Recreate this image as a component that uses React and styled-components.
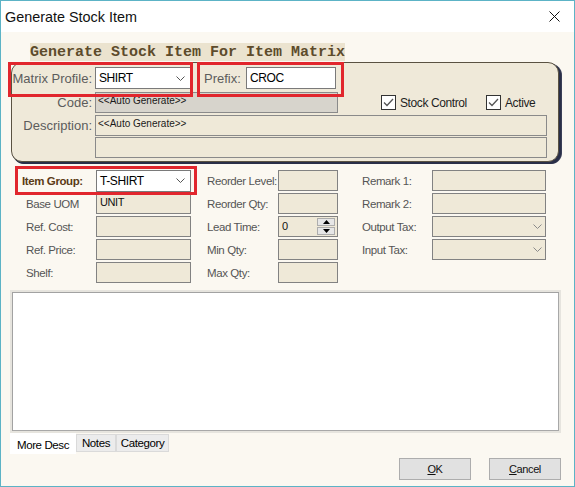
import React from 'react';
import styled, { createGlobalStyle, css } from 'styled-components';

const SANS = `"Liberation Sans", Arial, sans-serif`;

const narrow = css`
  font-family: ${SANS};
  font-size: 11.5px;
  letter-spacing: -0.4px;
`;

const Global = createGlobalStyle`
  html, body { margin: 0; padding: 0; background: #fff; }
  * { box-sizing: border-box; }
`;

const Window = styled.div`
  position: relative;
  width: 575px;
  height: 487px;
  border: 1px solid #5cb3c6;
  background: #fbf8f1;
  display: flex;
  flex-direction: column;
  overflow: hidden;
`;

const TitleBar = styled.div`
  height: 31px;
  flex: none;
  background: #fff;
  display: flex;
  align-items: center;
  justify-content: space-between;
  padding: 0 14px 0 4px;
  font-family: ${SANS};
  font-size: 14.4px;
  color: #111;
`;

const HeaderBand = styled.div`
  align-self: flex-start;
  margin: 11px 0 0 29px;
  width: 315px;
  height: 18px;
  background: #ebe3cf;
  font-family: "Liberation Mono", "Courier New", monospace;
  font-weight: bold;
  font-size: 15px;
  line-height: 19px;
  color: #5d4b2b;
  white-space: pre;
`;

const Panel = styled.div`
  margin: 1px 0 0 10px;
  width: 548px;
  height: 100px;
  flex: none;
  border: 1px solid #5a5242;
  border-radius: 11px;
  box-shadow: 1px 1px 0 #2a2f48, 2px 2px 0 #2a2f48, 3px 2px 0 #3a3f58;
  background: #efe9d9;
  padding-top: 4px;
  display: flex;
  flex-direction: column;
`;

const PanelRow = styled.div`
  display: flex;
  align-items: ${p => (p.$top ? 'flex-start' : 'center')};
  height: ${p => p.$h}px;
  margin-top: ${p => p.$mt || 0}px;
`;

const PanelLabel = styled.div`
  width: ${p => p.$w || 80}px;
  margin-left: ${p => p.$ml || 0}px;
  margin-right: 3px;
  text-align: ${p => (p.$left ? 'left' : 'right')};
  font-family: ${SANS};
  font-size: 13px;
  line-height: 21px;
  color: #5c5c5c;
  white-space: nowrap;
  flex: none;
`;

const WhiteSelect = styled.div`
  width: ${p => p.$w}px;
  height: 22px;
  background: #fff;
  border: 1px solid #7a7a7a;
  display: flex;
  align-items: center;
  justify-content: space-between;
  padding: 0 5px 0 3px;
  ${narrow};
  font-size: 12px;
  color: #000;
  flex: none;
`;

const CodeField = styled.div`
  width: ${p => p.$w}px;
  height: ${p => p.$h || 21}px;
  margin-top: ${p => p.$mt || 0}px;
  background: ${p => (p.$gray ? '#d7d4cc' : '#efe9d8')};
  border: 1px solid #8a8a8a;
  padding: 2px 2px;
  font-family: ${SANS};
  font-size: 10px;
  line-height: 12px;
  color: #1a1a1a;
  flex: none;
`;

const FieldStack = styled.div`
  display: flex;
  flex-direction: column;
`;

const CheckItem = styled.label`
  display: flex;
  align-items: center;
  gap: 4px;
  width: ${p => p.$w || 'auto'};
  margin-left: ${p => p.$ml || 0}px;
  ${narrow};
  font-size: 12px;
  color: #1e1e1e;
  flex: none;
`;

const Box = styled.span`
  width: 15px;
  height: 15px;
  background: #fff;
  border: 1px solid #333;
  display: flex;
  align-items: center;
  justify-content: center;
`;

const LowerGrid = styled.div`
  margin: 8px 0 0 21px;
  display: grid;
  grid-template-columns: 74px 95px 87px 60px 94px 114px;
  grid-auto-rows: 21px;
  row-gap: 2px;
  align-items: center;
`;

const GridLabel = styled.div`
  padding-left: ${p => p.$indent}px;
  ${narrow};
  font-weight: ${p => (p.$bold ? 'bold' : 'normal')};
  color: ${p => (p.$bold ? '#5b3b16' : '#555')};
  white-space: nowrap;
`;

const Field = styled.div`
  height: 21px;
  background: #efe9d8;
  border: 1px solid #828282;
  padding: 2px 3px;
  ${narrow};
  font-size: 11px;
  line-height: 13px;
  color: #111;
  display: flex;
  align-items: ${p => (p.$center ? 'center' : 'flex-start')};
  justify-content: space-between;
`;

const Spinner = styled.div`
  width: 18px;
  height: 17px;
  display: flex;
  flex-direction: column;
  gap: 1px;
  margin-right: -1px;
`;

const SpinBtn = styled.div`
  flex: 1;
  background: #e6e6e6;
  border: 1px solid #adadad;
  display: flex;
  align-items: center;
  justify-content: center;
`;

const TextArea = styled.div`
  margin: 7px 0 0 9px;
  width: 551px;
  height: 143px;
  flex: none;
  background: #fff;
  border: 2px solid #e6e4de;
  box-shadow: inset 1px 1px 0 #a2a2a2, inset -1px -1px 0 #a8a8a8;
`;

const Tabs = styled.div`
  margin-left: 9px;
  height: 21px;
  display: flex;
  align-items: flex-start;
  flex: none;
`;

const Tab = styled.div`
  width: ${p => p.$w}px;
  height: ${p => (p.$active ? 21 : 18)}px;
  margin-top: ${p => (p.$active ? 0 : 1)}px;
  background: ${p => (p.$active ? '#fff' : '#ececec')};
  border: 1px solid ${p => (p.$active ? '#fff' : '#dadada')};
  display: flex;
  align-items: center;
  justify-content: center;
  ${narrow};
  color: #000;
  padding-top: ${p => (p.$active ? 3 : 0)}px;
`;

const ButtonRow = styled.div`
  margin-top: 4px;
  display: flex;
  justify-content: flex-end;
  gap: 18px;
  padding-right: 13px;
`;

const Button = styled.div`
  width: 72px;
  height: 22px;
  background: #e1e1e1;
  border: 1px solid #adadad;
  display: flex;
  align-items: center;
  justify-content: center;
  ${narrow};
  font-size: 11px;
  color: #111;
  u { text-decoration: underline; }
`;

const RedMark = styled.div`
  position: absolute;
  left: ${p => p.$x}px;
  top: ${p => p.$y}px;
  width: ${p => p.$w}px;
  height: ${p => p.$h}px;
  border: 3px solid #e1262d;
  pointer-events: none;
`;

const Chevron = ({ color = '#555' }) => (
  <svg width="9" height="5" viewBox="0 0 9 5">
    <polyline points="0.5,0.5 4.5,4.5 8.5,0.5" fill="none" stroke={color} strokeWidth="1" />
  </svg>
);

const Check = () => (
  <svg width="11" height="9" viewBox="0 0 11 9">
    <polyline points="1,4.5 4,7.5 10,1" fill="none" stroke="#555" strokeWidth="1.3" />
  </svg>
);

const Tri = ({ up }) => (
  <svg width="7" height="4" viewBox="0 0 7 4">
    <polygon points={up ? '0,4 7,4 3.5,0' : '0,0 7,0 3.5,4'} fill="#000" />
  </svg>
);

const rows = [
  [
    { label: 'Item Group:', bold: true, kind: 'select', value: 'T-SHIRT' },
    { label: 'Reorder Level:' },
    { label: 'Remark 1:' },
  ],
  [
    { label: 'Base UOM', value: 'UNIT' },
    { label: 'Reorder Qty:' },
    { label: 'Remark 2:' },
  ],
  [
    { label: 'Ref. Cost:' },
    { label: 'Lead Time:', kind: 'spin', value: '0' },
    { label: 'Output Tax:', kind: 'tax' },
  ],
  [
    { label: 'Ref. Price:' },
    { label: 'Min Qty:' },
    { label: 'Input Tax:', kind: 'tax' },
  ],
  [{ label: 'Shelf:' }, { label: 'Max Qty:' }, null],
];

const indents = [4, 16, 24];

function Cell({ item }) {
  if (!item) return <span />;
  if (item.kind === 'select') {
    return <WhiteSelect $w={95}>{item.value}<Chevron /></WhiteSelect>;
  }
  if (item.kind === 'spin') {
    return (
      <Field $center>
        {item.value}
        <Spinner>
          <SpinBtn><Tri up /></SpinBtn>
          <SpinBtn><Tri /></SpinBtn>
        </Spinner>
      </Field>
    );
  }
  if (item.kind === 'tax') {
    return <Field $center><span /><Chevron color="#8a8a8a" /></Field>;
  }
  return <Field>{item.value || ''}</Field>;
}

export default function App() {
  return (
    <>
      <Global />
      <Window>
        <TitleBar>
          <span>Generate Stock Item</span>
          <svg width="11" height="11" viewBox="0 0 11 11">
            <path d="M0.5 0.5 L10.5 10.5 M10.5 0.5 L0.5 10.5" stroke="#111" strokeWidth="1" />
          </svg>
        </TitleBar>

        <HeaderBand>Generate Stock Item For Item Matrix</HeaderBand>

        <Panel>
          <PanelRow $h={22}>
            <PanelLabel>Matrix Profile:</PanelLabel>
            <WhiteSelect $w={96}>SHIRT<Chevron /></WhiteSelect>
            <PanelLabel $w={39} $ml={13} $left>Prefix:</PanelLabel>
            <WhiteSelect $w={90}>CROC</WhiteSelect>
          </PanelRow>
          <PanelRow $h={21} $mt={3}>
            <PanelLabel>Code:</PanelLabel>
            <CodeField $w={243} $gray>&lt;&lt;Auto Generate&gt;&gt;</CodeField>
            <CheckItem $ml={43} $w="105px"><Box><Check /></Box>Stock Control</CheckItem>
            <CheckItem><Box><Check /></Box>Active</CheckItem>
          </PanelRow>
          <PanelRow $h={42} $mt={2} $top>
            <PanelLabel>Description:</PanelLabel>
            <FieldStack>
              <CodeField $w={452}>&lt;&lt;Auto Generate&gt;&gt;</CodeField>
              <CodeField $w={452} $mt={1} $h={21} />
            </FieldStack>
          </PanelRow>
        </Panel>

        <LowerGrid>
          {rows.map((row, r) =>
            row.map((item, c) => (
              <React.Fragment key={`${r}-${c}`}>
                <GridLabel $indent={item && item.bold ? 0 : indents[c]} $bold={item && item.bold}>
                  {item ? item.label : ''}
                </GridLabel>
                <Cell item={item} />
              </React.Fragment>
            ))
          )}
        </LowerGrid>

        <TextArea />

        <Tabs>
          <Tab $w={66} $active>More Desc</Tab>
          <Tab $w={40}>Notes</Tab>
          <Tab $w={53}>Category</Tab>
        </Tabs>

        <ButtonRow>
          <Button><u>O</u>K</Button>
          <Button><u>C</u>ancel</Button>
        </ButtonRow>

        <RedMark $x={7} $y={61} $w={185} $h={35} />
        <RedMark $x={196} $y={61} $w={147} $h={35} />
        <RedMark $x={14} $y={165} $w={182} $h={29} />
      </Window>
    </>
  );
}
